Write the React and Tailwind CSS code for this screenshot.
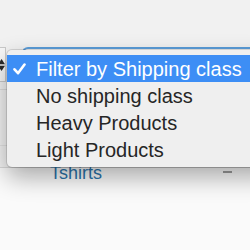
import React from "react";

const options = ["Filter by Shipping class", "No shipping class", "Heavy Products", "Light Products"];

function Check() {
  return (
    <svg width="13" height="12" viewBox="0 0 13 12" className="shrink-0">
      <path d="M1.5 6.3 L5 10.2 L11.5 1.5" fill="none" stroke="white" strokeWidth="2.6" strokeLinecap="round" strokeLinejoin="round" />
    </svg>
  );
}

function Stepper() {
  return (
    <svg width="7" height="16" viewBox="0 0 7 16">
      <path d="M-1 7 L3 1 L7 7 Z" fill="#2b2b2b" />
      <path d="M-1 9 L3 15 L7 9 Z" fill="#2b2b2b" />
    </svg>
  );
}

export default function App() {
  return (
    <div className="relative w-[250px] h-[250px] overflow-hidden bg-[#f1f1f1]" style={{ fontFamily: '"Liberation Sans", Arial, sans-serif' }}>
      {/* page behind the open menu */}
      <div className="flex flex-col">
        <div className="h-[47px]" />
        <div className="flex h-[35px]">
          <div className="w-[8px] -ml-[2px] pl-[1px] flex items-center bg-[#f7f7f7] border-y border-r border-[#c9c9c9]">
            <Stepper />
          </div>
          <div className="ml-[16px] flex-1 rounded-tl-[6px] border-t-2 border-l-2 border-[#5b9dd9] bg-white" />
        </div>
        <div className="h-[8px] border-b border-[#dcdcdc]" />
        <div className="h-[56px] border-b border-[#e2e2e2]" />
        <div className="h-[21px]" />
        <div className="flex items-start h-[83px] bg-[#fafafa] border-t border-[#d8d8d8]">
          <span className="ml-[50px] mt-[-6px] text-[18px] leading-[22px] text-[#2a74ab]">Tshirts</span>
          <span className="ml-auto mr-[18px] mt-[3px] w-[9px] h-[2px] bg-[#9a9a9a]" />
        </div>
      </div>

      {/* open dropdown menu */}
      <div className="absolute left-[7px] top-[50px] w-[270px] pt-[5px] pb-[4px] rounded-[5px] bg-[#efefef] shadow-[0_0_0_1px_rgba(0,0,0,0.12),0_10px_24px_rgba(0,0,0,0.33)]">
        {options.map((o, i) => (
          <div key={o} className={`flex items-center h-[27px] text-[20px] ${i === 0 ? "bg-[#3d8ef5] text-white" : "text-[#262626]"}`}>
            <div className="w-[29px] pl-[6px] flex items-center">{i === 0 && <Check />}</div>
            <span className="whitespace-nowrap">{o}</span>
          </div>
        ))}
      </div>
    </div>
  );
}
